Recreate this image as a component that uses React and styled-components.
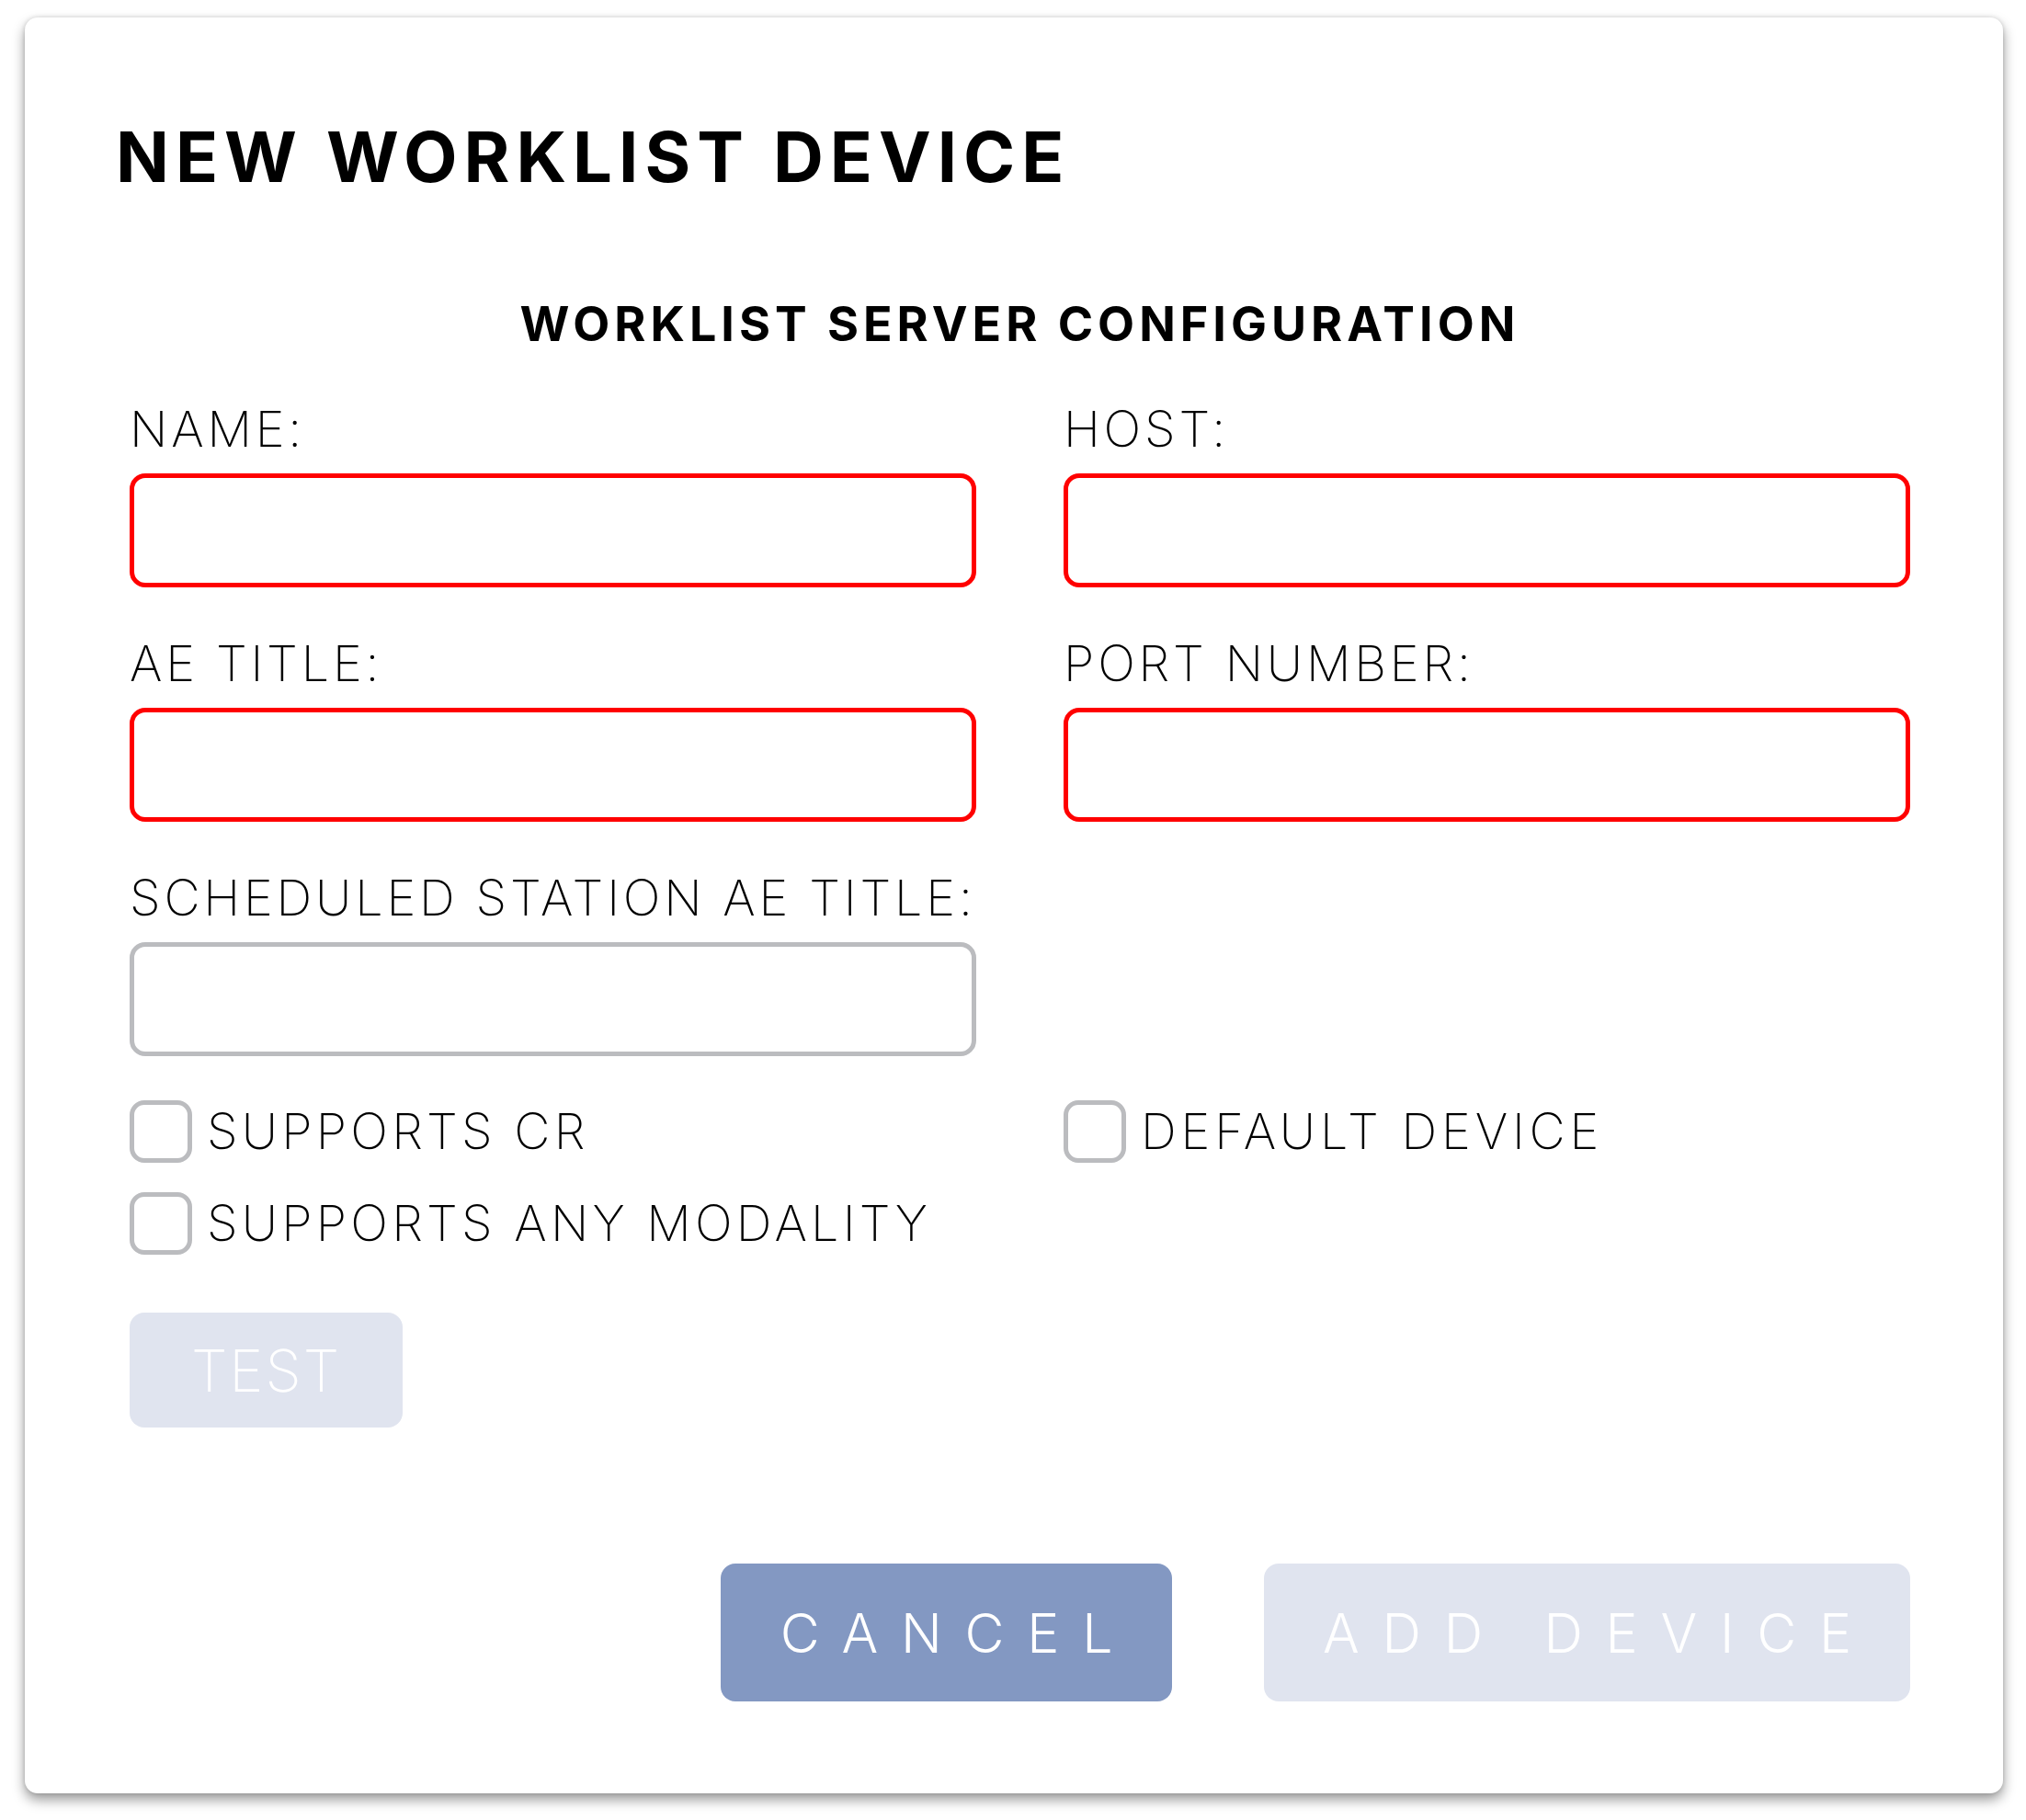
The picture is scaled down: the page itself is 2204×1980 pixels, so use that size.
import React from 'react';
import styled, { createGlobalStyle } from 'styled-components';

const GlobalStyle = createGlobalStyle`
  html, body {
    margin: 0;
    padding: 0;
    background: #ffffff;
  }
  body {
    font-family: Inter, "Liberation Sans", sans-serif;
    color: #000;
  }
`;

const Page = styled.div`
  padding: 19px 25px 31px 27px;
`;

const Card = styled.div`
  width: 2152px;
  box-sizing: border-box;
  background: #fff;
  border-radius: 14px;
  box-shadow: 0 7px 14px rgba(0, 0, 0, 0.4), 0 0 5px rgba(0, 0, 0, 0.14);
  padding: 113px 101px 100px 114px;
`;

const Title = styled.h1`
  margin: 0 0 0 -15px;
  font-size: 76px;
  line-height: 76px;
  font-weight: 700;
  letter-spacing: 7px;
`;

const SectionTitle = styled.h2`
  margin: 119px 0 0;
  text-align: center;
  font-size: 52px;
  line-height: 52px;
  font-weight: 700;
  letter-spacing: 5px;
`;

const FieldGrid = styled.div`
  margin-top: 61px;
  display: grid;
  grid-template-columns: 921px 921px;
  column-gap: 95px;
  row-gap: 56px;
`;

const Field = styled.div`
  display: flex;
  flex-direction: column;
  gap: 21px;
`;

const Label = styled.label`
  font-size: 54px;
  line-height: 54px;
  font-weight: 250;
  letter-spacing: 3.8px;
  white-space: nowrap;
`;

const Input = styled.input`
  box-sizing: border-box;
  width: 100%;
  height: 124px;
  border: 5px solid ${(p) => (p.$invalid ? '#ff0000' : '#bbbcbf')};
  border-radius: 17px;
  outline: none;
  background: #fff;
  font-size: 50px;
  padding: 0 24px;
`;

const CheckGrid = styled.div`
  margin-top: 48px;
  display: grid;
  grid-template-columns: 921px 921px;
  column-gap: 95px;
`;

const CheckColumn = styled.div`
  display: flex;
  flex-direction: column;
  gap: 32px;
`;

const CheckRow = styled.label`
  display: flex;
  align-items: center;
  gap: 16px;
  height: 68px;
  cursor: pointer;
`;

const Box = styled.span`
  box-sizing: border-box;
  width: 68px;
  height: 68px;
  flex: none;
  border: 5px solid #bbbcbf;
  border-radius: 16px;
  background: #fff;
`;

const CheckText = styled.span`
  font-size: 54px;
  line-height: 54px;
  font-weight: 250;
  letter-spacing: ${(p) => p.$spacing}px;
  white-space: nowrap;
`;

const TestButton = styled.button`
  margin-top: 63px;
  width: 297px;
  height: 125px;
  border: none;
  border-radius: 16px;
  background: #e0e4ef;
  color: #fff;
  font-family: inherit;
  font-size: 63px;
  font-weight: 250;
  letter-spacing: 2px;
  display: block;
`;

const Footer = styled.div`
  margin-top: 148px;
  display: flex;
  justify-content: flex-end;
  gap: 100px;
`;

const ActionButton = styled.button`
  width: ${(p) => p.$width}px;
  height: 150px;
  border: none;
  border-radius: 16px;
  background: ${(p) => (p.$primary ? '#8398c2' : '#e0e4ef')};
  color: #fff;
  font-family: inherit;
  font-size: 59px;
  font-weight: 300;
  letter-spacing: 24.8px;
  padding: 0 0 0 25px;
  white-space: nowrap;
`;

const fields = [
  { label: 'NAME:', invalid: true },
  { label: 'HOST:', invalid: true },
  { label: 'AE TITLE:', invalid: true },
  { label: 'PORT NUMBER:', invalid: true },
  { label: 'SCHEDULED STATION AE TITLE:', invalid: false },
];

const Check = ({ children, spacing = 4.2 }) => (
  <CheckRow>
    <Box />
    <CheckText $spacing={spacing}>{children}</CheckText>
  </CheckRow>
);

const App = () => {
  return (
    <Page>
      <GlobalStyle />
      <Card>
        <Title>NEW WORKLIST DEVICE</Title>
        <SectionTitle>WORKLIST SERVER CONFIGURATION</SectionTitle>

        <FieldGrid>
          {fields.map((f) => (
            <Field key={f.label}>
              <Label>{f.label}</Label>
              <Input $invalid={f.invalid} />
            </Field>
          ))}
        </FieldGrid>

        <CheckGrid>
          <CheckColumn>
            <Check>SUPPORTS CR</Check>
            <Check>SUPPORTS ANY MODALITY</Check>
          </CheckColumn>
          <CheckColumn>
            <Check spacing={4.8}>DEFAULT DEVICE</Check>
          </CheckColumn>
        </CheckGrid>

        <TestButton disabled>TEST</TestButton>

        <Footer>
          <ActionButton $primary $width={491}>CANCEL</ActionButton>
          <ActionButton disabled $width={703}>ADD DEVICE</ActionButton>
        </Footer>
      </Card>
    </Page>
  );
};

export default App;
